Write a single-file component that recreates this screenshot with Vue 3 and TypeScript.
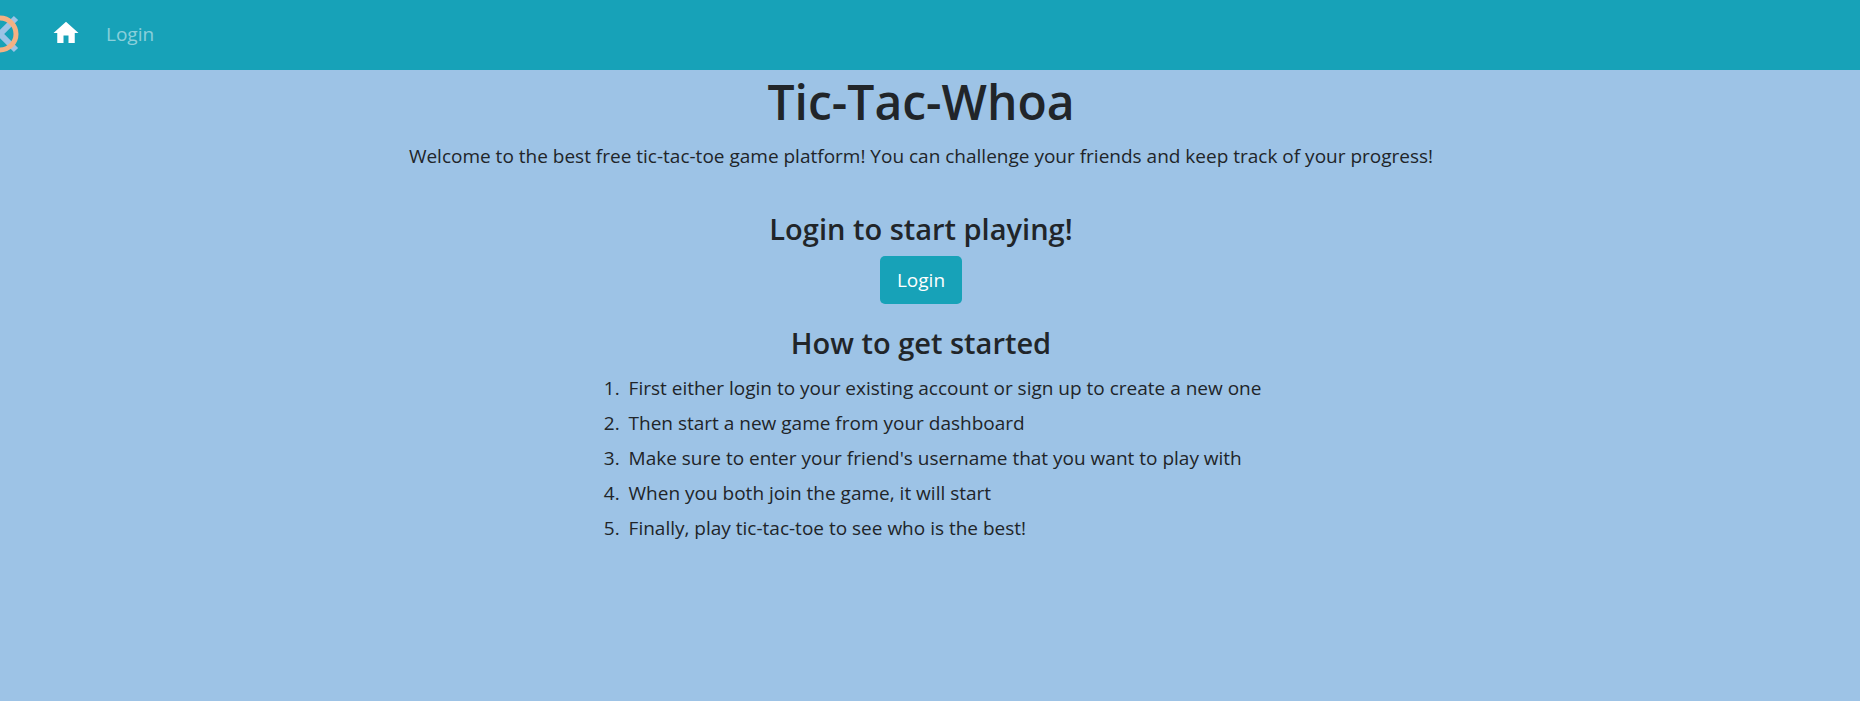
<script setup lang="ts">
const steps: string[] = [
  'First either login to your existing account or sign up to create a new one',
  'Then start a new game from your dashboard',
  "Make sure to enter your friend's username that you want to play with",
  'When you both join the game, it will start',
  'Finally, play tic-tac-toe to see who is the best!',
]
</script>

<template>
  <div class="app">
    <nav class="navbar">
      <a class="brand" href="#" aria-label="Tic-Tac-Whoa">
        <svg width="40" height="40" viewBox="0 0 40 40" aria-hidden="true">
          <path d="M4 4 36 36M36 4 4 36" stroke="#9dc3e6" stroke-width="6" fill="none" />
          <circle cx="20" cy="20" r="16" stroke="#f4b183" stroke-width="5" fill="none" />
        </svg>
      </a>
      <a class="home" href="#" aria-label="Home">
        <svg width="30" height="30" viewBox="0 0 24 24" aria-hidden="true">
          <path d="M10 20v-6h4v6h5v-8h3L12 3 2 12h3v8z" fill="#fff" />
        </svg>
      </a>
      <a class="nav-link" href="#">Login</a>
    </nav>
    <main class="content">
      <h1>Tic-Tac-Whoa</h1>
      <p>Welcome to the best free tic-tac-toe game platform! You can challenge your friends and keep track of your progress!</p>
      <section class="login">
        <h2>Login to start playing!</h2>
        <button type="button">Login</button>
      </section>
      <section class="guide">
        <h2>How to get started</h2>
        <ol>
          <li v-for="step in steps" :key="step">{{ step }}</li>
        </ol>
      </section>
    </main>
  </div>
</template>

<style>
body {
  margin: 0;
  background: #9dc3e6;
}
</style>

<style scoped>
.app {
  color: #212529;
  font-family: "Segoe UI", "Open Sans", "Noto Sans", sans-serif;
  font-size: 19px;
  line-height: 35px;
}
.navbar {
  display: flex;
  align-items: center;
  box-sizing: border-box;
  height: 70px;
  padding-bottom: 2px;
  background: #17a2b8;
  overflow: hidden;
}
.brand {
  display: flex;
  margin-left: -20px;
}
.home {
  display: flex;
  margin: 0 25px 2px 31px;
}
.nav-link {
  color: rgba(255, 255, 255, 0.5);
  text-decoration: none;
}
.content {
  display: flex;
  flex-direction: column;
  align-items: center;
  padding-right: 18px;
  text-align: center;
}
h1,
h2,
p {
  margin: 0;
}
h1 {
  font-size: 48px;
  font-weight: 600;
  line-height: 64px;
}
p {
  margin-top: 5px;
}
h2 {
  font-size: 29px;
  font-weight: 600;
  line-height: 36px;
}
.login {
  margin-top: 37px;
}
button {
  display: block;
  margin: 9px auto 0;
  padding: 7px 17px;
  border: 0;
  border-radius: 5px;
  background: #17a2b8;
  color: #fff;
  font: inherit;
  line-height: 34px;
}
.guide {
  margin-top: 21px;
}
ol {
  margin: 10px 0 0;
  padding-left: 44px;
  text-align: left;
}
li {
  padding-left: 4px;
}
</style>
